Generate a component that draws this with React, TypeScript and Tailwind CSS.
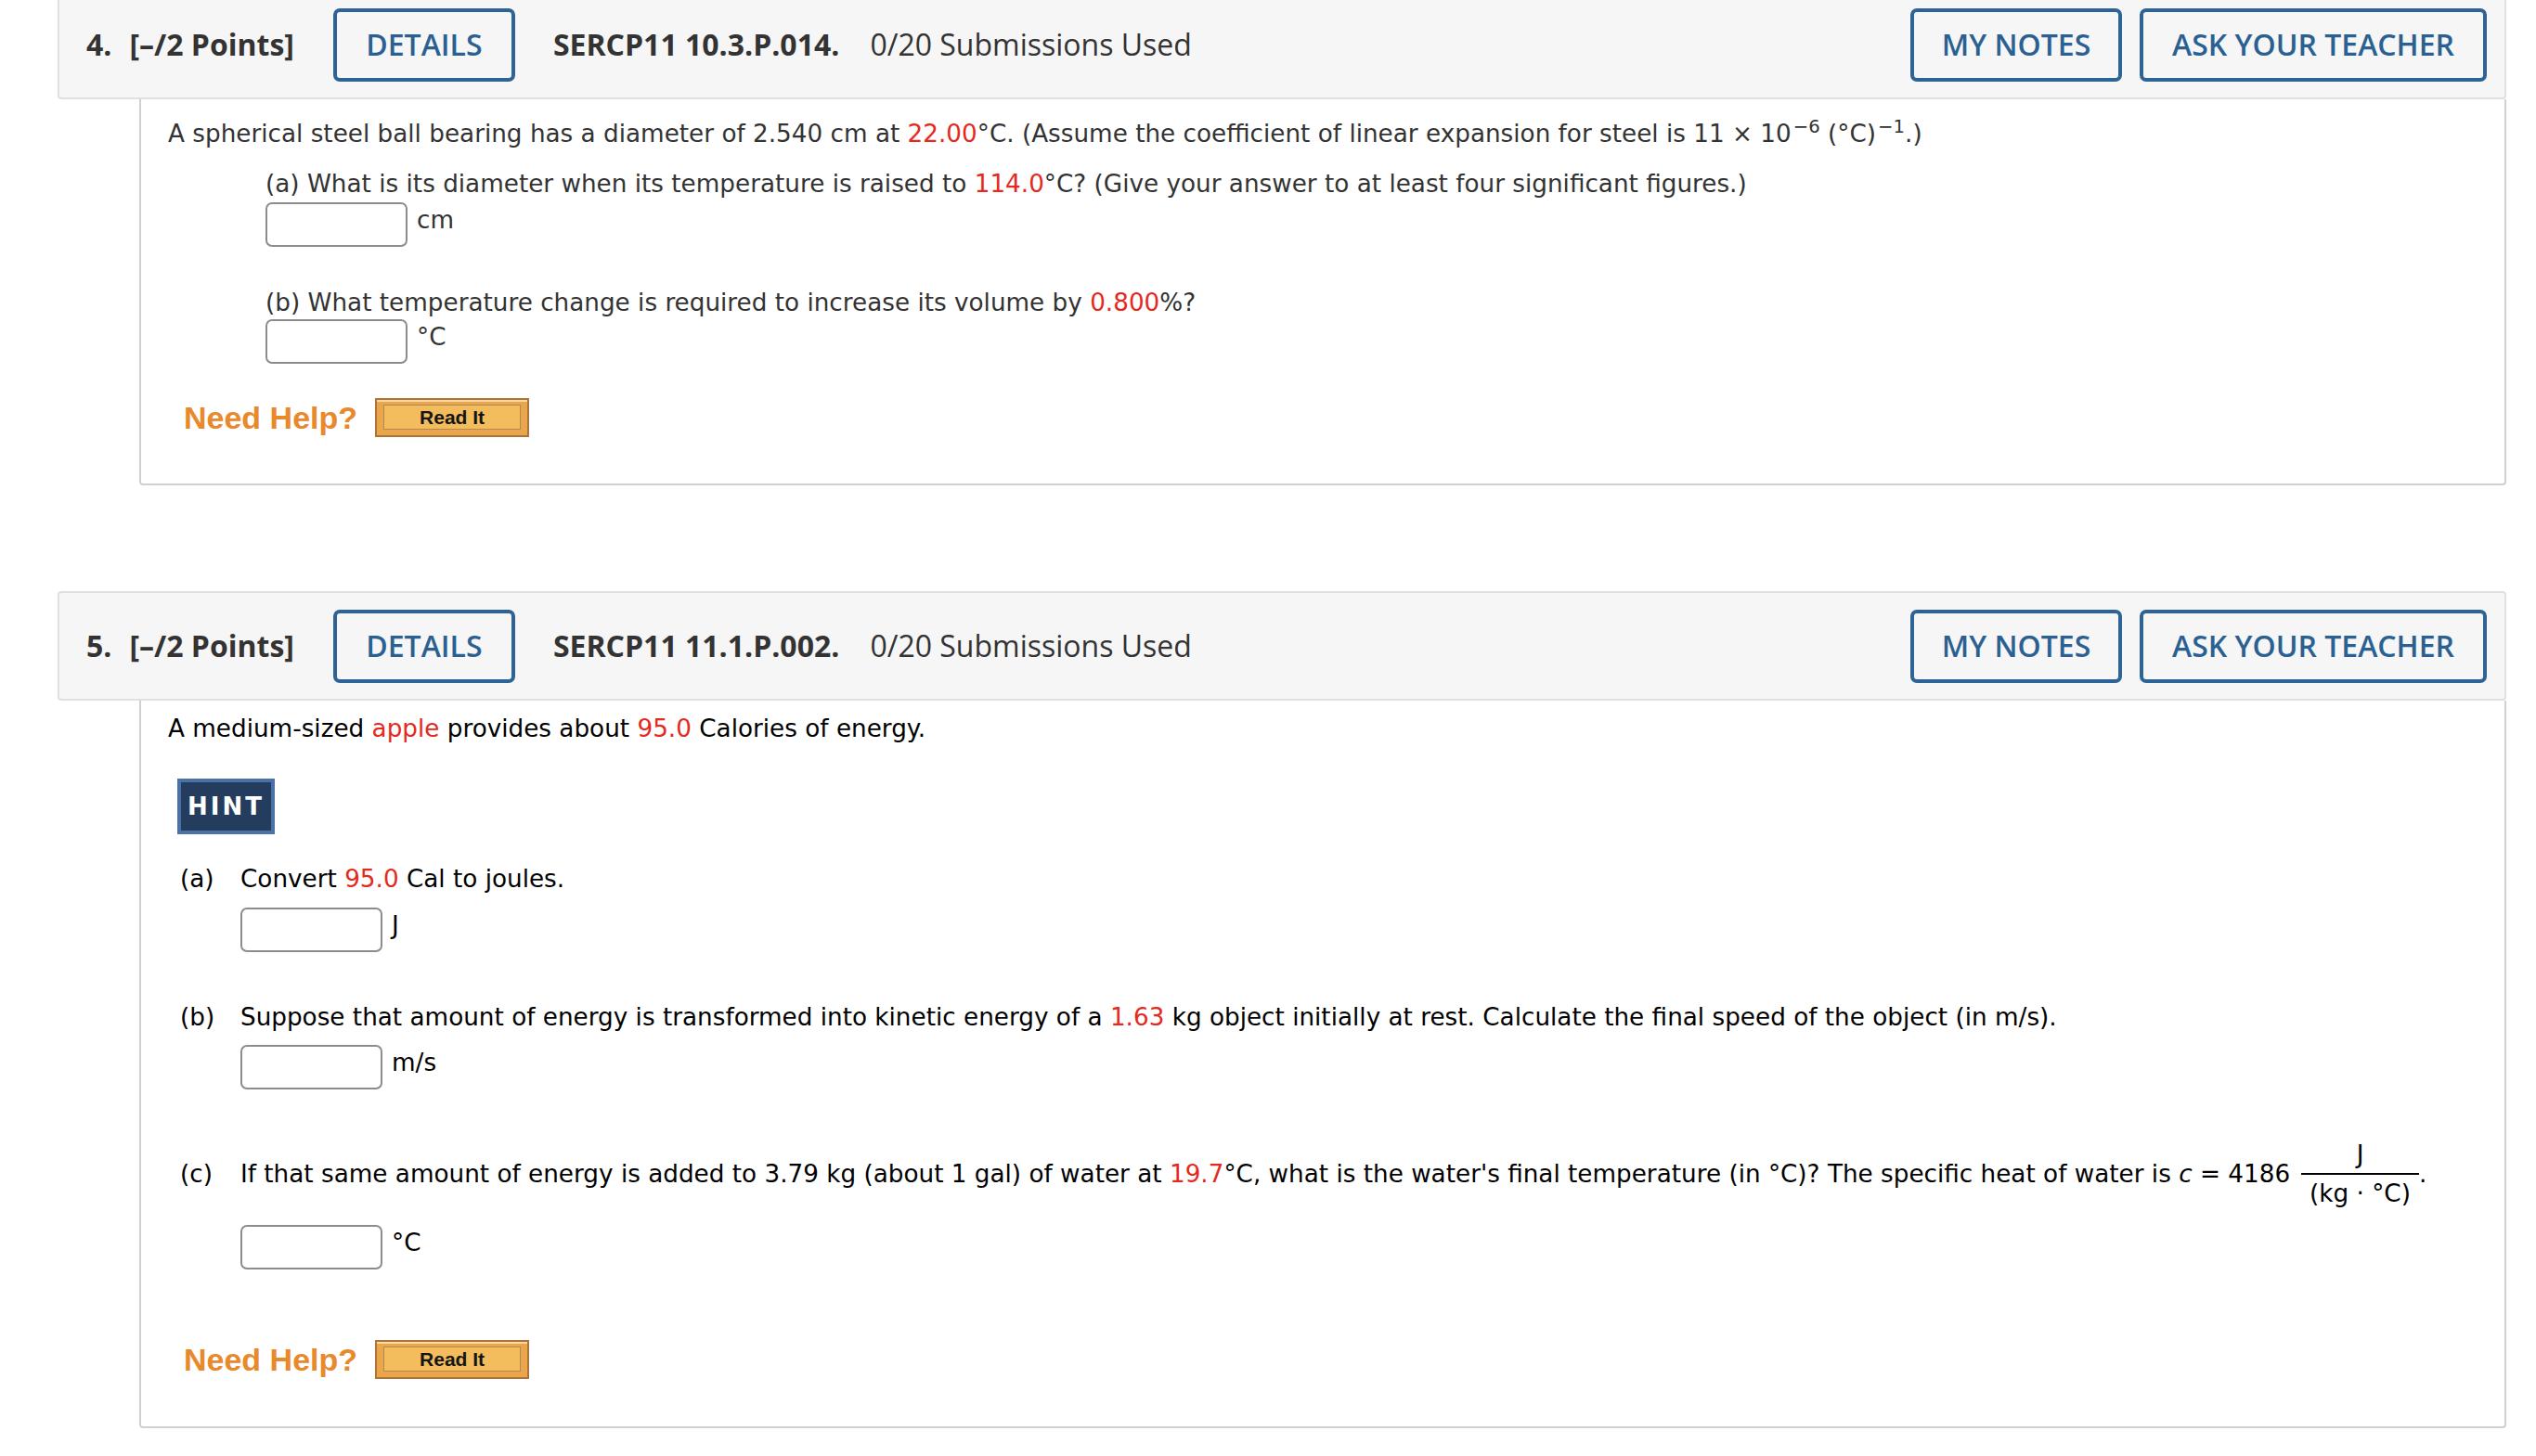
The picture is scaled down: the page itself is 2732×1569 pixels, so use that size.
import type { ReactNode } from "react";

function Red({ children }: { children: ReactNode }) {
  return <span className="text-[#e4291d]">{children}</span>;
}

function OutlineBtn({ children, className }: { children: ReactNode; className: string }) {
  return (
    <div
      className={`flex h-[79px] items-center justify-center rounded-[7px] border-[4px] border-[#2d6395] font-semibold text-[#2b6192] ${className}`}
    >
      {children}
    </div>
  );
}

function Header({ num, code }: { num: string; code: string }) {
  return (
    <div className="flex h-[118px] items-center rounded-[4px] border-2 border-[#e0e0e0] bg-[#f6f6f6] pl-[29px] pr-[19px] font-['Open_Sans',sans-serif] text-[32px] text-[#333]">
      <span className="font-bold">{num}</span>
      <span className="ml-[19px] font-bold">[–/2 Points]</span>
      <OutlineBtn className="ml-[42px] w-[196px]">DETAILS</OutlineBtn>
      <span className="ml-[41px] font-bold">{code}</span>
      <span className="ml-[33px]">0/20 Submissions Used</span>
      <OutlineBtn className="ml-auto w-[228px]">MY NOTES</OutlineBtn>
      <OutlineBtn className="ml-[19px] w-[374px]">ASK YOUR TEACHER</OutlineBtn>
    </div>
  );
}

function Answer({ unit, className }: { unit: string; className: string }) {
  return (
    <div className={`flex items-start ${className}`}>
      <div className="h-[48px] w-[153px] rounded-[7px] border-2 border-[#8c8c8c] bg-white" />
      <span className="-mt-[2px] ml-[10px]">{unit}</span>
    </div>
  );
}

function NeedHelp({ className }: { className: string }) {
  return (
    <div className={`flex items-center ${className}`}>
      <span className="font-['Liberation_Sans',Arial,sans-serif] text-[34px] leading-[34px] font-bold text-[#e8892c]">
        Need Help?
      </span>
      <div className="ml-[19px] h-[42px] w-[166px] border-2 border-[#ad743a] bg-[#eba64c] px-[7px] pt-[5px] pb-[6px] shadow-[inset_0_2px_0_#f7d9a6]">
        <div className="flex h-full items-center justify-center border-[1.5px] border-[#b08a55] bg-[#f3bc5c] font-['Liberation_Sans',Arial,sans-serif] text-[21px] font-bold text-[#151515]">
          Read It
        </div>
      </div>
    </div>
  );
}

function Part({ label, children, className }: { label: string; children: ReactNode; className: string }) {
  return (
    <div className={`flex ${className}`}>
      <span className="w-[65px]">{label}</span>
      <span>{children}</span>
    </div>
  );
}

export default function App() {
  return (
    <div className="h-[1569px] w-[2732px] overflow-hidden bg-white font-['DejaVu_Sans',Verdana,sans-serif] text-[26.25px] leading-[42px]">
      <div className="-mt-[11px] pl-[62px] pr-[32px]">
        {/* question 4 */}
        <Header num="4." code="SERCP11 10.3.P.014." />
        <div className="ml-[88px] rounded-b-[4px] border-x-2 border-b-2 border-[#d0d0d0] pt-[16px] pb-[50px] pl-[29px] text-[#333]">
          <p>
            A spherical steel ball bearing has a diameter of 2.540 cm at <Red>22.00</Red>°C. (Assume the
            coefficient of linear expansion for steel is 11 × 10<sup className="ml-[2px]">−6</sup> (°C)
            <sup className="ml-[2px]">−1</sup>.)
          </p>
          <div className="mt-[12px] ml-[105px]">
            <p>
              (a) What is its diameter when its temperature is raised to <Red>114.0</Red>°C? (Give your answer to
              at least four significant figures.)
            </p>
            <Answer unit="cm" className="-mt-[1px]" />
            <p className="mt-[39px]">
              (b) What temperature change is required to increase its volume by <Red>0.800</Red>%?
            </p>
            <Answer unit="°C" className="-mt-[3px]" />
          </div>
          <NeedHelp className="mt-[37px] ml-[17px]" />
        </div>

        {/* question 5 */}
        <div className="mt-[114px]">
          <Header num="5." code="SERCP11 11.1.P.002." />
        </div>
        <div className="ml-[88px] rounded-b-[4px] border-x-2 border-b-2 border-[#d0d0d0] pt-[9px] pb-[51px] pl-[29px] text-black">
          <p>
            A medium-sized <Red>apple</Red> provides about <Red>95.0</Red> Calories of energy.
          </p>
          <div className="mt-[33px] ml-[10px] flex h-[60px] w-[105px] items-center justify-center border-4 border-[#4a72a8] bg-[#243d5e] text-[26px] font-bold tracking-[3px] text-white">
            HINT
          </div>
          <div className="mt-[27px] ml-[13px]">
            <Part label="(a)" className="">
              Convert <Red>95.0</Red> Cal to joules.
            </Part>
            <Answer unit="J" className="mt-[10px] ml-[65px]" />
            <Part label="(b)" className="mt-[49px]">
              Suppose that amount of energy is transformed into kinetic energy of a <Red>1.63</Red> kg object
              initially at rest. Calculate the final speed of the object (in m/s).
            </Part>
            <Answer unit="m/s" className="mt-[9px] ml-[65px]" />
            <div className="mt-[54px] flex items-center whitespace-nowrap">
              <span className="w-[65px]">(c)</span>
              <span>
                If that same amount of energy is added to 3.79 kg (about 1 gal) of water at <Red>19.7</Red>°C, what
                is the water's final temperature (in °C)? The specific heat of water is <i>c</i> = 4186
              </span>
              <span className="ml-[12px] inline-flex flex-col items-center">
                <span className="mb-[4px] leading-[32px]">J</span>
                <span className="h-[2px] w-full bg-black" />
                <span className="px-[9px] pt-[4px] leading-[32px]">(kg · °C)</span>
              </span>
              <span>.</span>
            </div>
            <Answer unit="°C" className="mt-[18px] ml-[65px]" />
          </div>
          <NeedHelp className="mt-[76px] ml-[17px]" />
        </div>
      </div>
    </div>
  );
}
